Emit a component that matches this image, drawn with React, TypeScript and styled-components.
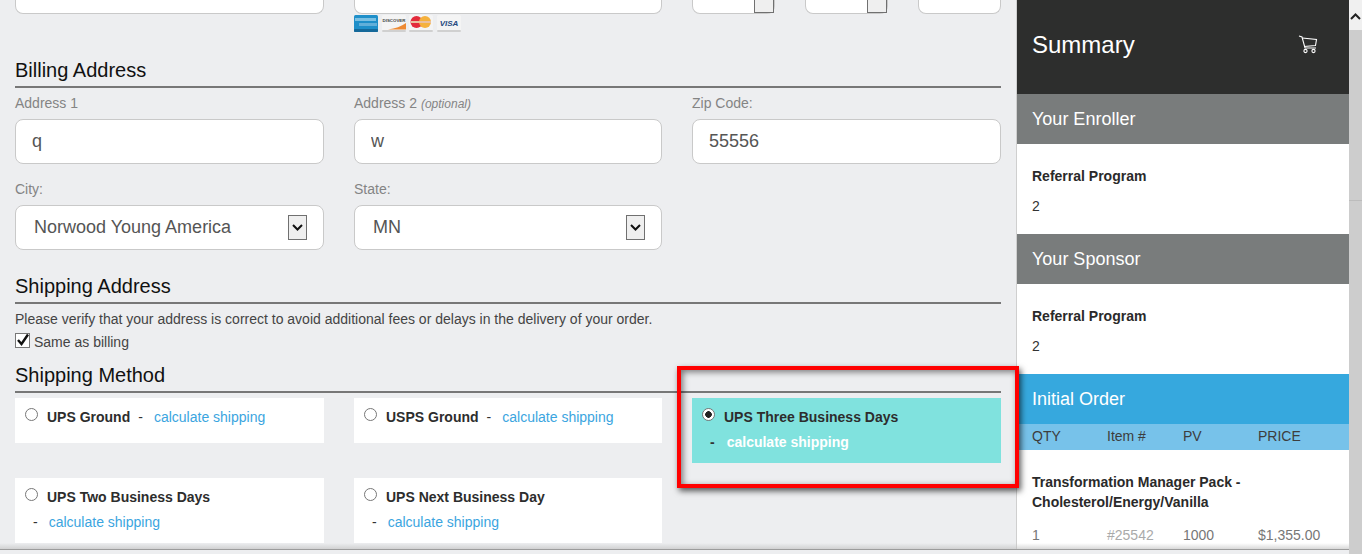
import React from 'react'
import styled, { createGlobalStyle } from 'styled-components'

const GlobalStyle = createGlobalStyle`
  html, body {
    margin: 0;
    height: 100%;
    overflow: hidden;
    background: #edeef0;
    font-family: 'Liberation Sans', Arial, sans-serif;
  }
  * {
    box-sizing: border-box;
  }
`

const Page = styled.div`
  position: relative;
  width: 1362px;
  height: 554px;
  display: flex;
  overflow: hidden;
`

const Main = styled.main`
  width: 1017px;
  flex-shrink: 0;
  padding-left: 15px;
  border-right: 1px solid #cfcfcf;
`

const Grid = styled.div<{ rowGap?: number }>`
  display: grid;
  grid-template-columns: 309px 308px 309px;
  column-gap: 30px;
  row-gap: ${(p) => p.rowGap ?? 0}px;
  align-items: start;
`

const CutInput = styled.div`
  height: 14px;
  background: #fff;
  border: 1px solid #c9c9c9;
  border-top: 0;
  border-radius: 0 0 8px 8px;
`

const CutRow = styled.div`
  display: grid;
  grid-template-columns: 83px 83px 83px;
  column-gap: 30px;
`

const NumberInput = styled(CutInput)`
  display: flex;
  justify-content: flex-end;
  padding-right: 0;
`

const Spinner = styled.div`
  width: 20px;
  height: 13px;
  background: #efefef;
  border: 1px solid #707070;
  border-top: 0;
`

const Cards = styled.svg`
  display: block;
  margin-top: 1px;
`

const SectionTitle = styled.h2<{ top: number }>`
  margin: ${(p) => p.top}px 0 0;
  width: 986px;
  height: 26px;
  font-size: 20px;
  line-height: 16px;
  font-weight: 400;
  color: #111;
  border-bottom: 2px solid #777;
`

const FieldRows = styled(Grid)`
  margin-top: 7px;
  row-gap: 17px;
`

const Label = styled.label`
  display: block;
  height: 16px;
  margin-bottom: 8px;
  font-size: 14px;
  line-height: 16px;
  color: #848484;

  em {
    font-size: 12px;
  }
`

const TextInput = styled.input`
  display: block;
  width: 100%;
  height: 45px;
  padding: 0 16px;
  background: #fff;
  border: 1px solid #c9c9c9;
  border-radius: 8px;
  font-family: inherit;
  font-size: 18px;
  color: #555;
`

const SelectBox = styled.div`
  height: 45px;
  display: flex;
  align-items: center;
  justify-content: space-between;
  padding: 0 16px 0 18px;
  background: #fff;
  border: 1px solid #c9c9c9;
  border-radius: 8px;
  font-size: 18px;
  color: #555;
`

const SelectArrow = styled.span`
  width: 19px;
  height: 25px;
  display: flex;
  align-items: center;
  justify-content: center;
  background: #efefef;
  border: 1px solid #707070;
`

const Note = styled.p`
  margin: 7px 0 0;
  font-size: 14px;
  line-height: 16px;
  color: #444;
`

const CheckRow = styled.label`
  margin-top: 6px;
  height: 16px;
  display: flex;
  align-items: flex-start;
  gap: 4px;
  font-size: 14px;
  line-height: 18px;
  color: #444;
`

const CheckBox = styled.span`
  position: relative;
  width: 15px;
  height: 15px;
  background: #fff;
  border: 1px solid #777;

  svg {
    position: absolute;
    left: 0;
    top: -1px;
  }
`

const MethodGrid = styled(Grid)`
  margin-top: 5px;
`

const MethodCard = styled.div<{ $tall?: boolean; $active?: boolean }>`
  height: ${(p) => (p.$tall ? 65 : 45)}px;
  padding: 10px 10px 0;
  background: ${(p) => (p.$active ? '#80e2de' : '#fff')};
  font-size: 14px;
  line-height: 18px;
`

const MethodLine = styled.div`
  display: flex;
  align-items: flex-start;
`

const Radio = styled.input.attrs({ type: 'radio', readOnly: true })`
  appearance: none;
  width: 13px;
  height: 13px;
  margin: 0 9px 0 0;
  flex-shrink: 0;
  border: 1px solid #777;
  border-radius: 50%;
  background: #fff;

  &:checked {
    background: radial-gradient(circle, #222 0 3px, #fff 3.6px);
  }
`

const MethodName = styled.strong`
  color: #2d2d2d;
`

const Dash = styled.span<{ $active?: boolean }>`
  color: #333;
  font-weight: ${(p) => (p.$active ? 700 : 400)};
  margin: 0 ${(p) => (p.$active ? 12 : 11)}px 0 8px;
`

const MethodLink = styled.a<{ $active?: boolean }>`
  color: ${(p) => (p.$active ? '#fff' : '#3ba5e0')};
  font-weight: ${(p) => (p.$active ? 700 : 400)};
`

const SecondLine = styled.div`
  margin-top: 7px;
  display: flex;
`

const Sidebar = styled.aside`
  width: 332px;
  flex-shrink: 0;
  background: #fff;
  overflow: hidden;
`

const SummaryHead = styled.header`
  height: 94px;
  padding: 0 31px 5px 15px;
  display: flex;
  align-items: center;
  justify-content: space-between;
  background: #2d2e2d;
  color: #fff;
  font-size: 24px;
`

const PanelHead = styled.div<{ $blue?: boolean }>`
  height: 50px;
  padding-left: 15px;
  display: flex;
  align-items: center;
  background: ${(p) => (p.$blue ? '#36a8de' : '#797c7c')};
  color: #fff;
  font-size: 18px;
`

const PanelBody = styled.div`
  height: 90px;
  padding: 23px 15px 0;
  font-size: 14px;
  line-height: 18px;
  color: #333;

  strong {
    display: block;
    margin-bottom: 12px;
    color: #2a2a2a;
  }
`

const OrderRow = styled.div`
  display: grid;
  grid-template-columns: 75px 76px 75px 1fr;
  padding-left: 15px;
  font-size: 14px;
`

const OrderHead = styled(OrderRow)`
  height: 26px;
  padding-bottom: 2px;
  align-items: center;
  background: #77c2ea;
  color: #3d3d3d;
`

const ProductName = styled.div`
  margin-top: 22px;
  padding: 0 15px;
  font-size: 14px;
  line-height: 20px;
  font-weight: 700;
  color: #2a2a2a;
`

const OrderLine = styled(OrderRow)`
  margin-top: 15px;
  line-height: 16px;
  color: #777;
`

const ItemNumber = styled.span`
  color: #aaa;
`

const Scrollbar = styled.div`
  width: 13px;
  flex-shrink: 0;
  display: flex;
  flex-direction: column;
  background: #cdcdcd;
`

const ScrollUp = styled.div`
  height: 30px;
  padding-top: 13px;
  display: flex;
  justify-content: center;
  background: #f0f0f0;
`

const ScrollThumb = styled.div`
  height: 171px;
  border-bottom: 1px solid #bcbcbc;
`

const BottomFade = styled.div`
  position: absolute;
  left: 0;
  bottom: 4px;
  width: 1349px;
  height: 7px;
  background: linear-gradient(rgba(190, 190, 190, 0), rgba(190, 190, 190, 0.6));
  border-bottom: 1px solid #9c9c9c;
`

const BottomEdge = styled.div`
  position: absolute;
  left: 0;
  bottom: 0;
  width: 1349px;
  height: 4px;
  background: #edeef0;
`

const RedCallout = styled.div`
  position: absolute;
  left: 677px;
  top: 366px;
  width: 342px;
  height: 122px;
  border: 4px solid #ff0000;
  box-shadow: 2px 3px 6px rgba(0, 0, 0, 0.65), inset 2px 2px 6px rgba(0, 0, 0, 0.5);
`

const logoFont = 'Liberation Sans'

const PaymentCards = () => (
  <Cards width="108" height="17" viewBox="0 0 108 17">
    {/* amex */}
    <rect x="0" y="0" width="24" height="17" rx="1.5" fill="#1f8fc9" />
    <rect x="0" y="14" width="24" height="3" rx="1" fill="#15699a" />
    <rect x="1" y="3" width="21" height="3" fill="#7cc0e2" />
    <rect x="5" y="8" width="18" height="3" fill="#62afd9" />
    {/* discover */}
    <rect x="28" y="0" width="24" height="17" rx="1.5" fill="#f4f4f4" />
    <text x="40" y="7" textAnchor="middle" fontSize="4.4" fontWeight="700" fill="#444" fontFamily={logoFont}>
      DISCOVER
    </text>
    <path d="M34 14.5 Q45 13 52 8 V14.5 Z" fill="#ee8a33" />
    <rect x="28" y="15" width="24" height="2" rx="1" fill="#d0d0d0" />
    {/* mastercard */}
    <rect x="55" y="0" width="24" height="17" rx="1.5" fill="#f4f4f4" />
    <circle cx="62.5" cy="7" r="6" fill="#e32b3c" />
    <circle cx="71" cy="7" r="6" fill="#f5b13d" />
    <rect x="57" y="6" width="20" height="2" fill="#e9c0a0" />
    <rect x="55" y="15" width="24" height="2" rx="1" fill="#d0d0d0" />
    {/* visa */}
    <rect x="83" y="0" width="24" height="17" rx="1.5" fill="#f4f4f4" />
    <text x="95" y="10.5" textAnchor="middle" fontSize="8" fontWeight="700" fontStyle="italic" fill="#25497f" fontFamily={logoFont}>
      VISA
    </text>
    <rect x="83" y="15" width="24" height="2" rx="1" fill="#d0d0d0" />
  </Cards>
)

const ChevronDown = () => (
  <svg width="13" height="9" viewBox="0 0 13 9">
    <path d="M2 2 L6.5 6.5 L11 2" fill="none" stroke="#111" strokeWidth="2" />
  </svg>
)

const CartIcon = () => (
  <svg width="20" height="19" viewBox="0 0 20 19" fill="none" stroke="#fff" strokeWidth="1.1">
    <path d="M1 1 L4 2 L7 13 H18" />
    <path d="M4.3 3 L18.5 4.5 L17.5 10.5 L6 11.5" />
    <circle cx="7.5" cy="16" r="1.6" />
    <circle cx="15.5" cy="16" r="1.6" />
  </svg>
)

interface MethodProps {
  name: string
  wrapped?: boolean
  active?: boolean
}

const Method: React.FC<MethodProps> = ({ name, wrapped, active }) => {
  const link = (
    <MethodLink $active={active}>calculate shipping</MethodLink>
  )
  return (
    <MethodCard $tall={wrapped} $active={active}>
      <MethodLine>
        <Radio checked={!!active} name={name} />
        <MethodName>{name}</MethodName>
        {!wrapped && <Dash>-</Dash>}
        {!wrapped && link}
      </MethodLine>
      {wrapped && (
        <SecondLine>
          <Dash $active={active}>-</Dash>
          {link}
        </SecondLine>
      )}
    </MethodCard>
  )
}

export default function App() {
  return (
    <Page>
      <GlobalStyle />
      <Main>
        <Grid>
          <CutInput />
          <div>
            <CutInput />
            <PaymentCards />
          </div>
          <CutRow>
            <NumberInput>
              <Spinner />
            </NumberInput>
            <NumberInput>
              <Spinner />
            </NumberInput>
            <CutInput />
          </CutRow>
        </Grid>

        <SectionTitle top={30}>Billing Address</SectionTitle>
        <FieldRows>
          <div>
            <Label>Address 1</Label>
            <TextInput readOnly value="q" />
          </div>
          <div>
            <Label>
              Address 2 <em>(optional)</em>
            </Label>
            <TextInput readOnly value="w" />
          </div>
          <div>
            <Label>Zip Code:</Label>
            <TextInput readOnly value="55556" />
          </div>
          <div>
            <Label>City:</Label>
            <SelectBox>
              Norwood Young America
              <SelectArrow>
                <ChevronDown />
              </SelectArrow>
            </SelectBox>
          </div>
          <div>
            <Label>State:</Label>
            <SelectBox>
              MN
              <SelectArrow>
                <ChevronDown />
              </SelectArrow>
            </SelectBox>
          </div>
        </FieldRows>

        <SectionTitle top={28}>Shipping Address</SectionTitle>
        <Note>Please verify that your address is correct to avoid additional fees or delays in the delivery of your order.</Note>
        <CheckRow>
          <CheckBox>
            <svg width="14" height="14" viewBox="0 0 14 14">
              <path d="M2 7 L5.5 11 L12 1.5" fill="none" stroke="#111" strokeWidth="2.4" />
            </svg>
          </CheckBox>
          Same as billing
        </CheckRow>

        <SectionTitle top={18}>Shipping Method</SectionTitle>
        <MethodGrid rowGap={15}>
          <Method name="UPS Ground" />
          <Method name="USPS Ground" />
          <Method name="UPS Three Business Days" wrapped active />
          <Method name="UPS Two Business Days" wrapped />
          <Method name="UPS Next Business Day" wrapped />
        </MethodGrid>
      </Main>

      <Sidebar>
        <SummaryHead>
          Summary
          <CartIcon />
        </SummaryHead>
        <PanelHead>Your Enroller</PanelHead>
        <PanelBody>
          <strong>Referral Program</strong>2
        </PanelBody>
        <PanelHead>Your Sponsor</PanelHead>
        <PanelBody>
          <strong>Referral Program</strong>2
        </PanelBody>
        <PanelHead $blue>Initial Order</PanelHead>
        <OrderHead>
          <span>QTY</span>
          <span>Item #</span>
          <span>PV</span>
          <span>PRICE</span>
        </OrderHead>
        <ProductName>Transformation Manager Pack - Cholesterol/Energy/Vanilla</ProductName>
        <OrderLine>
          <span>1</span>
          <ItemNumber>#25542</ItemNumber>
          <span>1000</span>
          <span>$1,355.00</span>
        </OrderLine>
      </Sidebar>

      <Scrollbar>
        <ScrollUp>
          <svg width="11" height="7" viewBox="0 0 11 7">
            <path d="M1 6 L5.5 1.5 L10 6" fill="none" stroke="#222" strokeWidth="2" />
          </svg>
        </ScrollUp>
        <ScrollThumb />
      </Scrollbar>

      <BottomFade />
      <BottomEdge />
      <RedCallout />
    </Page>
  )
}
